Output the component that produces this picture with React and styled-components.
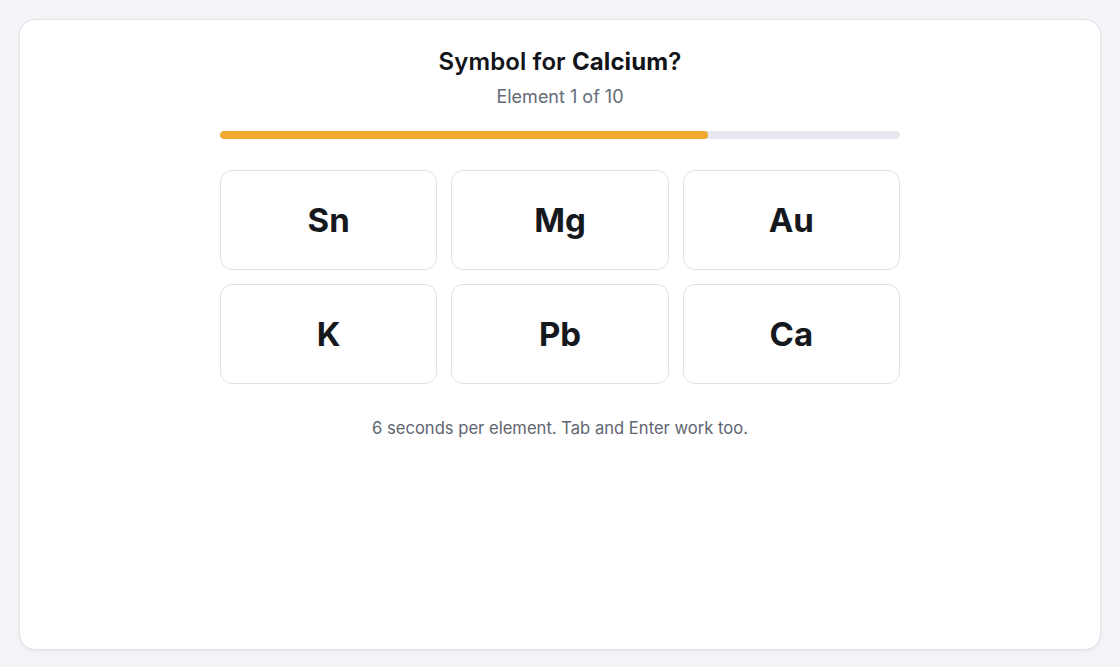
import React from "react";
import styled, { createGlobalStyle } from "styled-components";

const Global = createGlobalStyle`
  html, body { margin: 0; padding: 0; background: #f3f4f7; }
  body { font-family: Inter, "Noto Sans", "Liberation Sans", sans-serif; color: #111418; }
  * { box-sizing: border-box; }
`;

const Page = styled.div`
  width: 1120px;
  height: 667px;
  padding: 19px 19px 18px 19px;
`;

const Card = styled.div`
  height: 631px;
  background: #fff;
  border: 1px solid #e2e4e8;
  border-radius: 16px;
  box-shadow: 0 1px 3px rgba(16, 24, 40, 0.06);
  display: flex;
  flex-direction: column;
  align-items: center;
  padding-top: 27px;
`;

const Title = styled.h1`
  margin: 0;
  font-size: 24px;
  line-height: 30px;
  font-weight: 600;
  letter-spacing: 0.1px;
  b { font-weight: 700; }
`;

const Sub = styled.div`
  margin-top: 8px;
  font-size: 18px;
  line-height: 24px;
  color: #646b76;
`;

const Track = styled.div`
  margin-top: 22px;
  width: 680px;
  height: 8px;
  border-radius: 4px;
  background: #e6e8ee;
  overflow: hidden;
`;

const Fill = styled.div`
  height: 100%;
  background: #f2a92f;
  border-radius: 4px;
`;

const Grid = styled.div`
  margin-top: 31px;
  width: 680px;
  display: grid;
  grid-template-columns: repeat(3, 1fr);
  gap: 14px;
`;

const Choice = styled.button`
  height: 100px;
  background: #fff;
  border: 1px solid #dfe1e5;
  border-radius: 12px;
  font-family: inherit;
  font-size: 33px;
  font-weight: 700;
  color: #15181c;
  cursor: pointer;
  padding: 0;
`;

const Hint = styled.p`
  margin: 33px 0 0;
  font-size: 16.6px;
  line-height: 22px;
  color: #5f6570;
`;

const options = ["Sn", "Mg", "Au", "K", "Pb", "Ca"];

export default function App() {
  return (
    <Page>
      <Global />
      <Card>
        <Title>
          Symbol for <b>Calcium</b>?
        </Title>
        <Sub>Element 1 of 10</Sub>
        <Track>
          <Fill style={{ width: `${(488 / 680) * 100}%` }} />
        </Track>
        <Grid>
          {options.map((o) => (
            <Choice key={o}>{o}</Choice>
          ))}
        </Grid>
        <Hint>6 seconds per element. Tab and Enter work too.</Hint>
      </Card>
    </Page>
  );
}
